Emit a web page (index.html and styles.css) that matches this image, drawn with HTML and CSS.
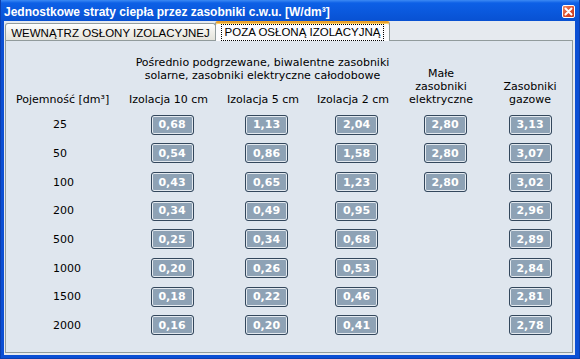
FILE: index.html
```html
<!DOCTYPE html>
<html lang="pl">
<head>
  <meta charset="UTF-8" />
  <title>Jednostkowe straty ciepła</title>
  <link rel="stylesheet" href="styles.css">
</head>
<body>
  <div class="window">
    <div class="titlebar">
      <span class="title">Jednostkowe straty ciepła przez zasobniki c.w.u. [W/dm³]</span>
      <span class="close">
        <svg width="9" height="9" viewBox="0 0 9 9"><path d="M1.5 1.5 L7.5 7.5 M7.5 1.5 L1.5 7.5" stroke="#fff" stroke-width="2" stroke-linecap="round"/></svg>
      </span>
    </div>
    <div class="client">
      <div class="tabs">
        <div class="tab">WEWNĄTRZ OSŁONY IZOLACYJNEJ</div>
        <div class="tab active"><span class="focus">POZA OSŁONĄ IZOLACYJNĄ</span></div>
      </div>
      <div class="panel">
        <div class="head-grid">
          <div class="group-head">Pośrednio podgrzewane, biwalentne zasobniki<br>solarne, zasobniki elektryczne całodobowe</div>
          <div class="tall-head c4">Małe<br>zasobniki<br>elektryczne</div>
          <div class="tall-head c5">Zasobniki<br>gazowe</div>
          <div class="first-head">Pojemność [dm³]</div>
          <div class="col-head">Izolacja 10 cm</div>
          <div class="col-head">Izolacja 5 cm</div>
          <div class="col-head">Izolacja 2 cm</div>
        </div>
        <div class="grid">
          <div class="cap">25</div>
          <div class="val">0,68</div><div class="val">1,13</div><div class="val">2,04</div><div class="val">2,80</div><div class="val">3,13</div>

          <div class="cap">50</div>
          <div class="val">0,54</div><div class="val">0,86</div><div class="val">1,58</div><div class="val">2,80</div><div class="val">3,07</div>

          <div class="cap">100</div>
          <div class="val">0,43</div><div class="val">0,65</div><div class="val">1,23</div><div class="val">2,80</div><div class="val">3,02</div>

          <div class="cap">200</div>
          <div class="val">0,34</div><div class="val">0,49</div><div class="val">0,95</div><div></div><div class="val">2,96</div>

          <div class="cap">500</div>
          <div class="val">0,25</div><div class="val">0,34</div><div class="val">0,68</div><div></div><div class="val">2,89</div>

          <div class="cap">1000</div>
          <div class="val">0,20</div><div class="val">0,26</div><div class="val">0,53</div><div></div><div class="val">2,84</div>

          <div class="cap">1500</div>
          <div class="val">0,18</div><div class="val">0,22</div><div class="val">0,46</div><div></div><div class="val">2,81</div>

          <div class="cap">2000</div>
          <div class="val">0,16</div><div class="val">0,20</div><div class="val">0,41</div><div></div><div class="val">2,78</div>
        </div>
      </div>
    </div>
  </div>
</body>
</html>
```

FILE: styles.css
```css
* {
  box-sizing: border-box;
}
body {
  margin: 0;
  width: 580px;
  height: 359px;
  overflow: hidden;
  font-family: "DejaVu Sans", Verdana, sans-serif;
  font-size: 11px;
}
.window {
  height: 359px;
  display: flex;
  flex-direction: column;
  background: #0b4fd4;
  border-left: 1px solid #0a3fb0;
  border-right: 1px solid #0a3fb0;
  border-bottom: 1px solid #0a3fb0;
}
.titlebar {
  height: 21px;
  flex: none;
  display: flex;
  align-items: center;
  justify-content: space-between;
  padding: 0 4px 0 3px;
  background: linear-gradient(180deg, #3c8af4 0, #0d60e6 3px, #0a58dc 60%, #0851d2 100%);
}
.title {
  color: #fff;
  font-family: "Liberation Sans", Arial, sans-serif;
  font-weight: bold;
  font-size: 12px;
  margin-top: 2px;
}
.close {
  width: 13px;
  height: 13px;
  display: flex;
  align-items: center;
  justify-content: center;
  border: 1px solid #fff;
  border-radius: 2px;
  background: linear-gradient(135deg, #f08a64, #d8492a 60%, #c23a1e);
  margin-top: 2px;
}
.client {
  flex: 1;
  display: flex;
  flex-direction: column;
  margin: 0 4px 3px 3px;
  padding: 0 2px 2px 1px;
  background: #e6eaef;
}
.tabs {
  height: 19px;
  flex: none;
  display: flex;
  align-items: flex-end;
  font-family: "Liberation Sans", Arial, sans-serif;
  font-size: 11.5px;
  color: #000;
}
.tab {
  width: 211px;
  height: 17px;
  display: flex;
  align-items: center;
  justify-content: center;
  padding-top: 1px;
  border: 1px solid #919b9c;
  border-bottom: none;
  border-radius: 3px 3px 0 0;
  background: linear-gradient(180deg, #ffffff, #f0efea 50%, #e4e3dc);
}
.tab.active {
  width: 175px;
  height: 20px;
  margin-bottom: -1px;
  margin-left: -1px;
  position: relative;
  padding-top: 0;
  border-top: 2px solid #e9a12f;
  background: #fcfcfe;
  box-shadow: inset 0 1px 0 #ffd062;
}
.focus {
  outline: 1px dotted #000;
  outline-offset: 1px;
  padding: 0 2px;
  line-height: 13px;
}
.panel {
  flex: 1;
  border: 1px solid #919b9c;
  background: #dfe6ee;
  padding-top: 15px;
}
.head-grid,
.grid {
  display: grid;
  grid-template-columns: 119px 94px 95px 85px 92px 78px;
  line-height: 13px;
  color: #000;
}
.head-grid {
  grid-template-rows: 26px 15.3px;
  row-gap: 8.7px;
}
.grid {
  grid-auto-rows: 20px;
  row-gap: 8.7px;
  margin-top: 8.7px;
}
.group-head {
  grid-column: 2 / 5;
  grid-row: 1;
  text-align: center;
  padding-left: 1px;
}
.tall-head {
  grid-row: 1 / 3;
  align-self: end;
  text-align: center;
}
.tall-head.c4 {
  grid-column: 5;
  padding-right: 8px;
}
.tall-head.c5 {
  grid-column: 6;
}
.first-head {
  grid-column: 1;
  grid-row: 2;
  align-self: end;
  padding-left: 10px;
  white-space: nowrap;
}
.col-head {
  grid-row: 2;
  align-self: end;
  text-align: center;
  white-space: nowrap;
  padding-right: 7px;
}
.cap {
  align-self: center;
  padding-left: 47px;
}
.val {
  justify-self: center;
  width: 43px;
  height: 20px;
  display: flex;
  align-items: center;
  justify-content: center;
  border: 1px solid #33475c;
  border-radius: 3px;
  background: #8ea2b5;
  box-shadow: inset 0 0 0 1px #e3e9ef;
  color: #fff;
  font-weight: bold;
  font-size: 11px;
}
```
